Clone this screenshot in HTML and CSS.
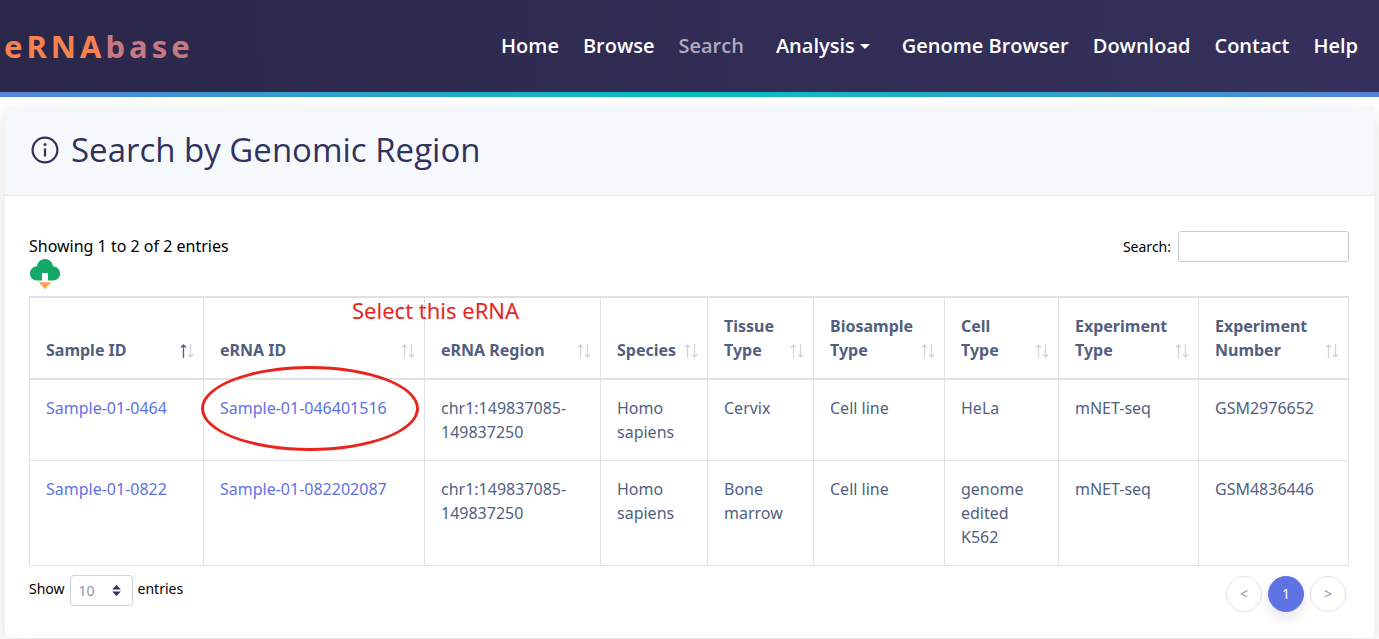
FILE: index.html
```html
<!DOCTYPE html>
<html lang="en">
<head>
<meta charset="utf-8">
<title>eRNAbase - Search by Genomic Region</title>
<link rel="stylesheet" href="styles.css">
</head>
<body>
<svg class="sprite" aria-hidden="true">
  <symbol id="arrows" viewBox="0 0 14 14">
    <path class="up" d="M3.500 14V1M1 3.500L3.500 1L6 3.500"/>
    <path class="down" d="M10.500 0V13M8 10.500L10.500 13L13 10.500"/>
  </symbol>
</svg>
<header class="topbar">
  <a class="brand" href="#"><span class="brand-main">eRNA</span><span class="brand-sub">base</span></a>
  <nav class="nav">
    <a href="#">Home</a>
    <a href="#">Browse</a>
    <a href="#" class="active">Search</a>
    <button type="button" class="dropdown">Analysis</button>
    <a href="#">Genome Browser</a>
    <a href="#">Download</a>
    <a href="#">Contact</a>
    <a href="#">Help</a>
  </nav>
</header>
<main class="card">
  <div class="card-header">
    <svg class="info" viewBox="0 0 28 28" aria-hidden="true">
      <circle cx="14" cy="14" r="12.400" fill="none" stroke="#32325d" stroke-width="2.200"/>
      <circle cx="14" cy="8.500" r="1.500" fill="#32325d"/>
      <path d="M14 12.500V20.500" stroke="#32325d" stroke-width="2.200"/>
    </svg>
    <h1>Search by Genomic Region</h1>
  </div>
  <div class="card-body">
    <div class="tools">
      <div class="summary">
        <span>Showing 1 to 2 of 2 entries</span>
        <button type="button" class="download" aria-label="Download table">
          <svg viewBox="0 0 30 30" aria-hidden="true">
            <path d="M7 21.500C3 21.500 0 18.500 0 14.500C0 10.500 3 7.500 7 7.300C7.500 3 11 0 15 0S22.500 3 23 7.300C27 7.500 30 10.500 30 14.500C30 18.500 27 21.500 23 21.500H18V14H12V21.500Z" fill="#12a866"/>
            <path d="M8.500 23.300H21.500L15 30Z" fill="#fba54c"/>
          </svg>
        </button>
      </div>
      <div class="filter"><label for="filter">Search:</label><input id="filter" type="search"></div>
    </div>
    <table>
      <colgroup><col class="c-sample"><col class="c-erna"><col class="c-region"><col class="c-species"><col class="c-tissue"><col class="c-bio"><col class="c-cell"><col class="c-exp"><col class="c-num"></colgroup>
      <thead>
        <tr>
          <th><button type="button" class="sort asc"><span>Sample ID</span><svg><use href="#arrows"/></svg></button></th>
          <th><div class="anchor"><button type="button" class="sort"><span>eRNA ID</span><svg><use href="#arrows"/></svg></button><span class="note">Select this eRNA</span></div></th>
          <th><button type="button" class="sort"><span>eRNA Region</span><svg><use href="#arrows"/></svg></button></th>
          <th><button type="button" class="sort"><span>Species</span><svg><use href="#arrows"/></svg></button></th>
          <th><button type="button" class="sort"><span>Tissue<br>Type</span><svg><use href="#arrows"/></svg></button></th>
          <th><button type="button" class="sort"><span>Biosample<br>Type</span><svg><use href="#arrows"/></svg></button></th>
          <th><button type="button" class="sort"><span>Cell<br>Type</span><svg><use href="#arrows"/></svg></button></th>
          <th><button type="button" class="sort"><span>Experiment<br>Type</span><svg><use href="#arrows"/></svg></button></th>
          <th><button type="button" class="sort"><span>Experiment<br>Number</span><svg><use href="#arrows"/></svg></button></th>
        </tr>
      </thead>
      <tbody>
        <tr>
          <td><a href="#">Sample-01-0464</a></td>
          <td><div class="anchor"><a href="#">Sample-01-046401516</a><span class="ring"></span></div></td>
          <td>chr1:149837085-149837250</td>
          <td>Homo sapiens</td>
          <td>Cervix</td>
          <td>Cell line</td>
          <td>HeLa</td>
          <td>mNET-seq</td>
          <td>GSM2976652</td>
        </tr>
        <tr>
          <td><a href="#">Sample-01-0822</a></td>
          <td><a href="#">Sample-01-082202087</a></td>
          <td>chr1:149837085-149837250</td>
          <td>Homo sapiens</td>
          <td>Bone marrow</td>
          <td>Cell line</td>
          <td>genome edited K562</td>
          <td>mNET-seq</td>
          <td>GSM4836446</td>
        </tr>
      </tbody>
    </table>
    <div class="footer">
      <div class="length">
        <label for="length">Show</label>
        <span class="select-wrap">
          <select id="length"><option>10</option><option>25</option><option>50</option></select>
          <svg viewBox="0 0 8 10" aria-hidden="true"><path d="M0 4L4 0L8 4ZM0 6H8L4 10Z" fill="#32325d"/></svg>
        </span>
        <span class="unit">entries</span>
      </div>
      <div class="pages">
        <button type="button" aria-label="Previous">&lt;</button>
        <button type="button" class="current">1</button>
        <button type="button" aria-label="Next">&gt;</button>
      </div>
    </div>
  </div>
</main>
</body>
</html>
```
FILE: styles.css
```css
* { box-sizing: border-box; }
body {
  margin: 0;
  background: #fff;
  color: #525f7f;
  font: 16px/24px "Noto Sans", "Open Sans", sans-serif;
}
a { color: #5e72e4; text-decoration: none; }
button, input, select { font: inherit; color: inherit; }
button { background: none; border: 0; padding: 0; cursor: pointer; }
.sprite { display: none; }

.topbar {
  position: relative;
  display: flex;
  align-items: center;
  justify-content: space-between;
  padding: 28px 21px 33px 4px;
  background: linear-gradient(80deg, #2b274a, #36315c);
}
.topbar::after {
  content: "";
  position: absolute;
  left: 0;
  right: 0;
  bottom: 0;
  height: 5px;
  background: linear-gradient(90deg, #5585d8, #09bfbf 50%, #5585d8);
}
.brand { font-size: 31px; line-height: 36px; font-weight: 700; letter-spacing: 4px; }
.brand-main { color: #f5834f; }
.brand-sub { color: #c87880; }
.nav {
  display: flex;
  gap: 24px;
  font-family: "Open Sans", "Noto Sans", sans-serif;
  font-size: 20px;
  font-weight: 600;
  color: #fff;
}
.nav a { color: inherit; }
.nav .active { color: #adacbe; }
.dropdown { display: flex; align-items: center; gap: 5px; margin: 0 8px; }
.dropdown::after {
  content: "";
  border: 5px solid transparent;
  border-top-color: #fff;
  border-bottom: 0;
}

.card {
  margin: 9px 5px 1px;
  border-radius: 4px;
  background: #fff;
  box-shadow: 0 8px 20px rgba(0, 0, 0, 0.12);
}
.card-header {
  display: flex;
  align-items: center;
  gap: 12px;
  padding: 22px 26px 23px;
  background: #f6f9fc;
  border-bottom: 1px solid #e6e9ee;
}
.info { width: 28px; height: 28px; }
h1 {
  margin: 0;
  font-family: "Open Sans", "Noto Sans", sans-serif;
  font-size: 33px;
  line-height: 44px;
  font-weight: 400;
  color: #32325d;
}
.card-body { padding: 35px 25px 26px 24px; }
.tools { display: flex; justify-content: space-between; align-items: flex-start; color: #000; }
.summary { display: flex; flex-direction: column; align-items: flex-start; padding: 3px 0 7px; }
.download { display: block; height: 31px; padding-top: 1px; }
.download svg { display: block; width: 32px; height: 30px; }
.filter { display: flex; align-items: center; gap: 7px; font-size: 14px; }
.filter input {
  width: 171px;
  height: 31px;
  border: 1px solid #c8cad0;
  border-radius: 3px;
  background: #fff;
}

table { width: 100%; table-layout: fixed; border-collapse: collapse; }
.c-sample { width: 174px; }
.c-erna { width: 221px; }
.c-region { width: 176px; }
.c-species { width: 107px; }
.c-tissue { width: 106px; }
.c-bio { width: 131px; }
.c-cell { width: 114px; }
.c-exp { width: 140px; }
.c-num { width: 150px; }
th, td { border: 1px solid #dee2e6; text-align: left; }
th { padding: 16px 9px 16px 16px; vertical-align: bottom; border-width: 2px 1px; }
td { padding: 16px; vertical-align: top; }
.anchor { position: relative; }
.sort {
  --up: #d3d5da;
  display: flex;
  width: 100%;
  align-items: flex-end;
  justify-content: space-between;
  text-align: left;
  font-weight: 700;
}
.asc { --up: #525f7f; }
.sort svg { flex: none; width: 14px; height: 14px; margin-bottom: 4px; }
.up, .down { fill: none; stroke: #d3d5da; stroke-width: 1.3; }
.up { stroke: var(--up); }
.note {
  position: absolute;
  left: 132px;
  bottom: 36px;
  font-size: 22px;
  line-height: 32px;
  font-weight: 400;
  color: #e8241c;
  white-space: nowrap;
}
.ring {
  position: absolute;
  left: -19px;
  top: -30px;
  width: 218px;
  height: 85px;
  border: 3px solid #e8241c;
  border-radius: 50%;
  pointer-events: none;
}

.footer { display: flex; justify-content: space-between; align-items: flex-start; padding-top: 9px; }
.length { display: flex; align-items: flex-start; gap: 5px; font-size: 14px; line-height: 28px; color: #000; }
.select-wrap { position: relative; display: flex; }
.select-wrap svg { position: absolute; right: 12px; top: 10px; width: 9px; height: 11px; pointer-events: none; }
select {
  appearance: none;
  width: 63px;
  height: 31px;
  padding: 0 8px;
  border: 1px solid #cad1d7;
  border-radius: 4px;
  background: #fff;
  color: #8898aa;
}
.pages { display: flex; gap: 6px; padding: 1px 3px 0 0; }
.pages button {
  width: 36px;
  height: 36px;
  border: 1px solid #dee2e6;
  border-radius: 50%;
  font-size: 14px;
  color: #8898aa;
}
.pages .current {
  background: #5e72e4;
  border-color: #5e72e4;
  color: #fff;
  box-shadow: 0 6px 12px rgba(50, 50, 93, 0.12);
}
```
